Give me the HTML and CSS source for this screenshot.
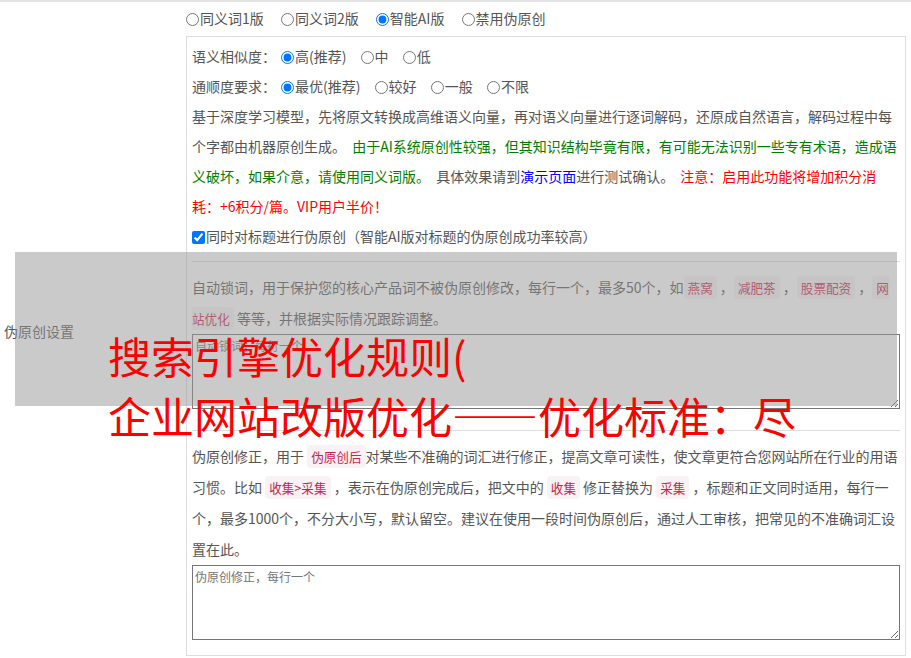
FILE: index.html
```html
<!DOCTYPE html>
<html lang="zh-CN">

<head>
    <meta charset="UTF-8">
    <meta name="viewport" content="width=device-width, initial-scale=1.0">
    <link rel="stylesheet" href="styles.css">
</head>

<body>
    <div class="form-row">
        <div class="row-label">伪原创设置</div>
        <div class="row-content">
            <div class="mode-list">
                <label class="opt"><input type="radio" name="mode">同义词1版</label>
                <label class="opt"><input type="radio" name="mode">同义词2版</label>
                <label class="opt"><input type="radio" name="mode" checked>智能AI版</label>
                <label class="opt"><input type="radio" name="mode">禁用伪原创</label>
            </div>

            <div class="settings-box">
                <div class="line">
                    语义相似度：<label class="opt small"><input type="radio" name="sim" checked>高(推荐)</label>
                    <label class="opt small"><input type="radio" name="sim">中</label>
                    <label class="opt small"><input type="radio" name="sim">低</label>
                </div>
                <div class="line">
                    通顺度要求：<label class="opt small"><input type="radio" name="flu" checked>最优(推荐)</label>
                    <label class="opt small"><input type="radio" name="flu">较好</label>
                    <label class="opt small"><input type="radio" name="flu">一般</label>
                    <label class="opt small"><input type="radio" name="flu">不限</label>
                </div>
                <p class="desc wide">基于深度学习模型，先将原文转换成高维语义向量，再对语义向量进行逐词解码，还原成自然语言，解码过程中每个字都由机器原创生成。 <span class="green">由于AI系统原创性较强，但其知识结构毕竟有限，有可能无法识别一些专有术语，造成语义破坏，如果介意，请使用同义词版。</span> 具体效果请到<a class="demo" href="#">演示页面</a>进行测试确认。 <span class="red">注意：启用此功能将增加积分消耗：+6积分/篇。VIP用户半价！</span></p>
                <div class="line">
                    <label class="check"><input type="checkbox" checked>同时对标题进行伪原创（智能AI版对标题的伪原创成功率较高）</label>
                </div>

                <hr class="sep">
                <p class="desc tall">自动锁词，用于保护您的核心产品词不被伪原创修改，每行一个，最多50个，如<code>燕窝</code> ，<code>减肥茶</code> ，<code>股票配资</code> ，<code>网站优化</code> 等等，并根据实际情况跟踪调整。</p>
                <textarea class="words" placeholder="自动锁词，每行一个"></textarea>

                <hr class="sep">
                <p class="desc tall">伪原创修正，用于 <code>伪原创后</code>对某些不准确的词汇进行修正，提高文章可读性，使文章更符合您网站所在行业的用语习惯。比如 <code>收集&gt;采集</code> ，表示在伪原创完成后，把文中的 <code>收集</code> 修正替换为 <code>采集</code> ，标题和正文同时适用，每行一个，最多1000个，不分大小写，默认留空。建议在使用一段时间伪原创后，通过人工审核，把常见的不准确词汇设置在此。</p>
                <textarea class="words last" placeholder="伪原创修正，每行一个"></textarea>
            </div>
        </div>
    </div>

    <!-- title tooltip laid over the form -->
    <div class="title-mask">
        <div class="big-title">搜索引擎优化规则(<br>企业网站改版优化——优化标准：尽</div>
    </div>
</body>

</html>
```

FILE: styles.css
```css
body {
    margin: 0;
    font-family: "Noto Sans CJK SC", "Microsoft YaHei", sans-serif;
    font-size: 14px;
    color: #555;
}

.form-row {
    display: flex;
    align-items: center;
    border-top: 2px solid #e4e4e4;
}

.row-label {
    width: 182px;
    padding-left: 4px;
    line-height: 20px;
}

.row-content {
    flex: 1;
    padding: 6px 5px 3px 0;
}

.mode-list {
    line-height: 20px;
}

.opt {
    margin-right: 14px;
}

.opt.small {
    margin-right: 6px;
}

.opt input,
.check input {
    width: 13px;
    height: 13px;
    margin: 0 1px 0 0;
    vertical-align: -2px;
}

.opt.small input {
    margin-left: 5px;
}

.settings-box {
    margin-top: 8px;
    border: 1px solid #ddd;
    padding: 4px 5px 6px;
}

.line {
    line-height: 30px;
}

.desc {
    margin: 0;
    line-height: 30px;
}

.desc.wide {
    word-spacing: 3px;
}

.desc.tall {
    line-height: 31px;
}

.green {
    color: #008000;
}

.red {
    color: #f00;
}

.demo {
    color: #00f;
    text-decoration: none;
}

code {
    font-family: "Noto Sans CJK SC", sans-serif;
    font-size: 90%;
    color: #c7254e;
    background: #f9f2f4;
    padding: 2px 4px;
    border-radius: 4px;
}

.sep {
    border: 0;
    border-top: 1px solid #ddd;
    margin: 10px 0;
}

.words {
    display: block;
    box-sizing: border-box;
    width: 100%;
    height: 75px;
    margin: 0 0 21px;
    border: 1px solid #767676;
    padding: 2px;
    font-family: "Noto Sans CJK SC", sans-serif;
    font-size: 12px;
}

.words.last {
    margin-bottom: 9px;
}

.title-mask {
    position: absolute;
    left: 15px;
    top: 252px;
    width: 882px;
    height: 154px;
    background: rgba(150, 150, 150, 0.5);
}

.big-title {
    position: absolute;
    left: 93px;
    top: 73px;
    font-size: 43px;
    line-height: 60px;
    color: #f00;
    white-space: nowrap;
}
```
